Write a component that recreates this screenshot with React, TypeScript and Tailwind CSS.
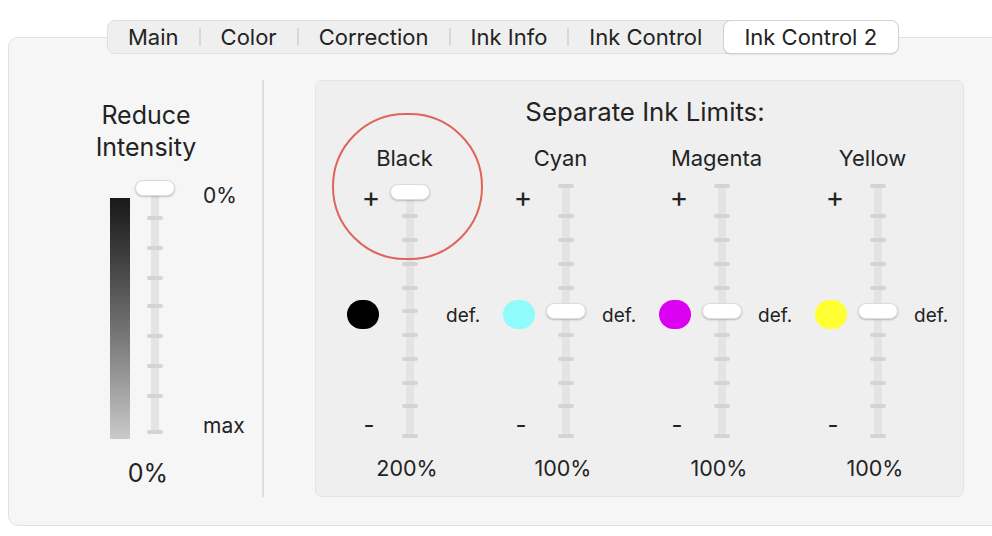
import React from "react";

type SliderProps = {
  ticks: number[];
  thumbTop: number;
  trackClass: string;
  heightClass: string;
};

function VSlider({ ticks, thumbTop, trackClass, heightClass }: SliderProps) {
  return (
    <div className={`relative w-[40px] shrink-0 ${heightClass}`}>
      <div className={`absolute left-[16px] w-[8px] rounded-full bg-[#e4e4e4] ${trackClass}`} />
      {ticks.map((t, i) => (
        <div
          key={i}
          className="absolute left-[12px] h-[4px] w-[16px] rounded-full bg-[#d4d4d4]"
          style={{ top: t - 2 }}
        />
      ))}
      <div
        className="absolute left-0 h-[16px] w-[40px] rounded-full border border-[#dcdcdc] bg-white shadow-[0_1px_2px_rgba(0,0,0,0.22)]"
        style={{ top: thumbTop }}
      />
    </div>
  );
}

const inkTicks = [2, 31.5, 55.5, 79.5, 103.5, 127, 150.5, 174.5, 198.5, 222, 252];

type Ink = {
  name: string;
  color: string;
  value: string;
  thumbTop: number;
  plusMl: string;
  minusMl: string;
};

const inks: Ink[] = [
  { name: "Black", color: "bg-[#000000]", value: "200%", thumbTop: 0, plusMl: "ml-[29px]", minusMl: "ml-[27px]" },
  { name: "Cyan", color: "bg-[#8ffcfb]", value: "100%", thumbTop: 119, plusMl: "ml-[25px]", minusMl: "ml-[23px]" },
  { name: "Magenta", color: "bg-[#dc00f3]", value: "100%", thumbTop: 119, plusMl: "ml-[25px]", minusMl: "ml-[23px]" },
  { name: "Yellow", color: "bg-[#ffff33]", value: "100%", thumbTop: 119, plusMl: "ml-[25px]", minusMl: "ml-[23px]" },
];

function InkColumn({ ink }: { ink: Ink }) {
  return (
    <div className="flex w-[156px] shrink-0 flex-col">
      <div className="pr-[11px] text-center text-[22px] leading-[26px]">{ink.name}</div>
      <div className="mt-[13px] flex h-[254px]">
        <div className="flex w-[58px] shrink-0 flex-col items-start">
          <div className={`h-[26px] w-[20px] text-center text-[28px] leading-[26px] ${ink.plusMl}`}>+</div>
          <div className={`ml-[15px] mt-[90px] h-[32px] w-[32px] rounded-full blur-[0.6px] ${ink.color}`} />
          <div className={`mt-[83px] h-[26px] w-[20px] text-center text-[24px] leading-[26px] ${ink.minusMl}`}>-</div>
        </div>
        <VSlider ticks={inkTicks} thumbTop={ink.thumbTop} trackClass="top-[1px] bottom-[1px]" heightClass="h-[254px]" />
        <div className="ml-[16px] mt-[119px] h-[26px] text-[19px] leading-[26px]">def.</div>
      </div>
      <div className="mt-[17px] pr-[6px] text-center text-[21.5px] leading-[26px]">{ink.value}</div>
    </div>
  );
}

const tabs = ["Main", "Color", "Correction", "Ink Info", "Ink Control"];

export default function App() {
  return (
    <div className="relative h-[536px] w-[992px] overflow-hidden bg-white font-['Inter','Noto_Sans',sans-serif] text-[#232323]">
      {/* Tab bar */}
      <div className="relative z-10 ml-[107px] mt-[20px] flex h-[34px] w-max items-center rounded-[8px] border border-[#e0e0e0] bg-[#efefef] text-[22px]">
        {tabs.map((t, i) => (
          <React.Fragment key={t}>
            <div className={i < tabs.length - 1 ? "px-[20px] leading-[32px]" : "pl-[20px] pr-[21px] leading-[32px]"}>{t}</div>
            {i < tabs.length - 1 && <div className="h-[18px] w-[2px] bg-[#d8d8d8]" />}
          </React.Fragment>
        ))}
        <div className="-my-[1px] -mr-[1px] h-[34px] rounded-[8px] border border-[#d2d2d2] bg-white pl-[20px] pr-[21px] leading-[32px] shadow-[0_1px_1px_rgba(0,0,0,0.08)]">
          Ink Control 2
        </div>
      </div>

      {/* Panel */}
      <div className="-mt-[17px] ml-[8px] flex h-[489px] w-[1000px] rounded-[10px] border border-[#e1e1e1] bg-[#f6f6f6]">
        {/* Left column */}
        <div className="w-[253px] shrink-0">
          <div className="pl-[21px] pt-[61px] text-center text-[25px] leading-[32px]">
            Reduce
            <br />
            Intensity
          </div>
          <div className="mt-[17px] flex pl-[101px]">
            <div className="mt-[18px] h-[241px] w-[20px] shrink-0 bg-linear-to-b from-[#191919] to-[#cacaca]" />
            <div className="ml-[5px]">
              <VSlider
                ticks={[38, 68, 98, 126, 156, 186, 216, 252]}
                thumbTop={0}
                trackClass="top-[4px] bottom-[2px]"
                heightClass="h-[256px]"
              />
            </div>
            <div className="ml-[28px] flex flex-col text-[21px] leading-[24px]">
              <div className="mt-[4px]">0%</div>
              <div className="mt-[206px]">max</div>
            </div>
          </div>
          <div className="mt-[20px] pl-[25px] text-center text-[25px] leading-[28px]">0%</div>
        </div>

        {/* Divider */}
        <div className="mt-[42px] h-[417px] w-[2px] shrink-0 bg-[#dedede]" />

        {/* Group box */}
        <div className="ml-[51px] mt-[42px] h-[417px] w-[649px] shrink-0 rounded-[7px] border border-[#e4e4e4] bg-[#efefef]">
          <div className="pl-[11px] pt-[17px] text-center text-[25.8px] leading-[28px]">Separate Ink Limits:</div>
          <div className="mt-[19px] flex pl-[16px]">
            {inks.map((ink) => (
              <InkColumn key={ink.name} ink={ink} />
            ))}
          </div>
        </div>
      </div>

      {/* Red annotation circle */}
      <div className="pointer-events-none absolute left-[332px] top-[113px] h-[147px] w-[151px] rounded-full border-[2.5px] border-[#e06457]" />
    </div>
  );
}
